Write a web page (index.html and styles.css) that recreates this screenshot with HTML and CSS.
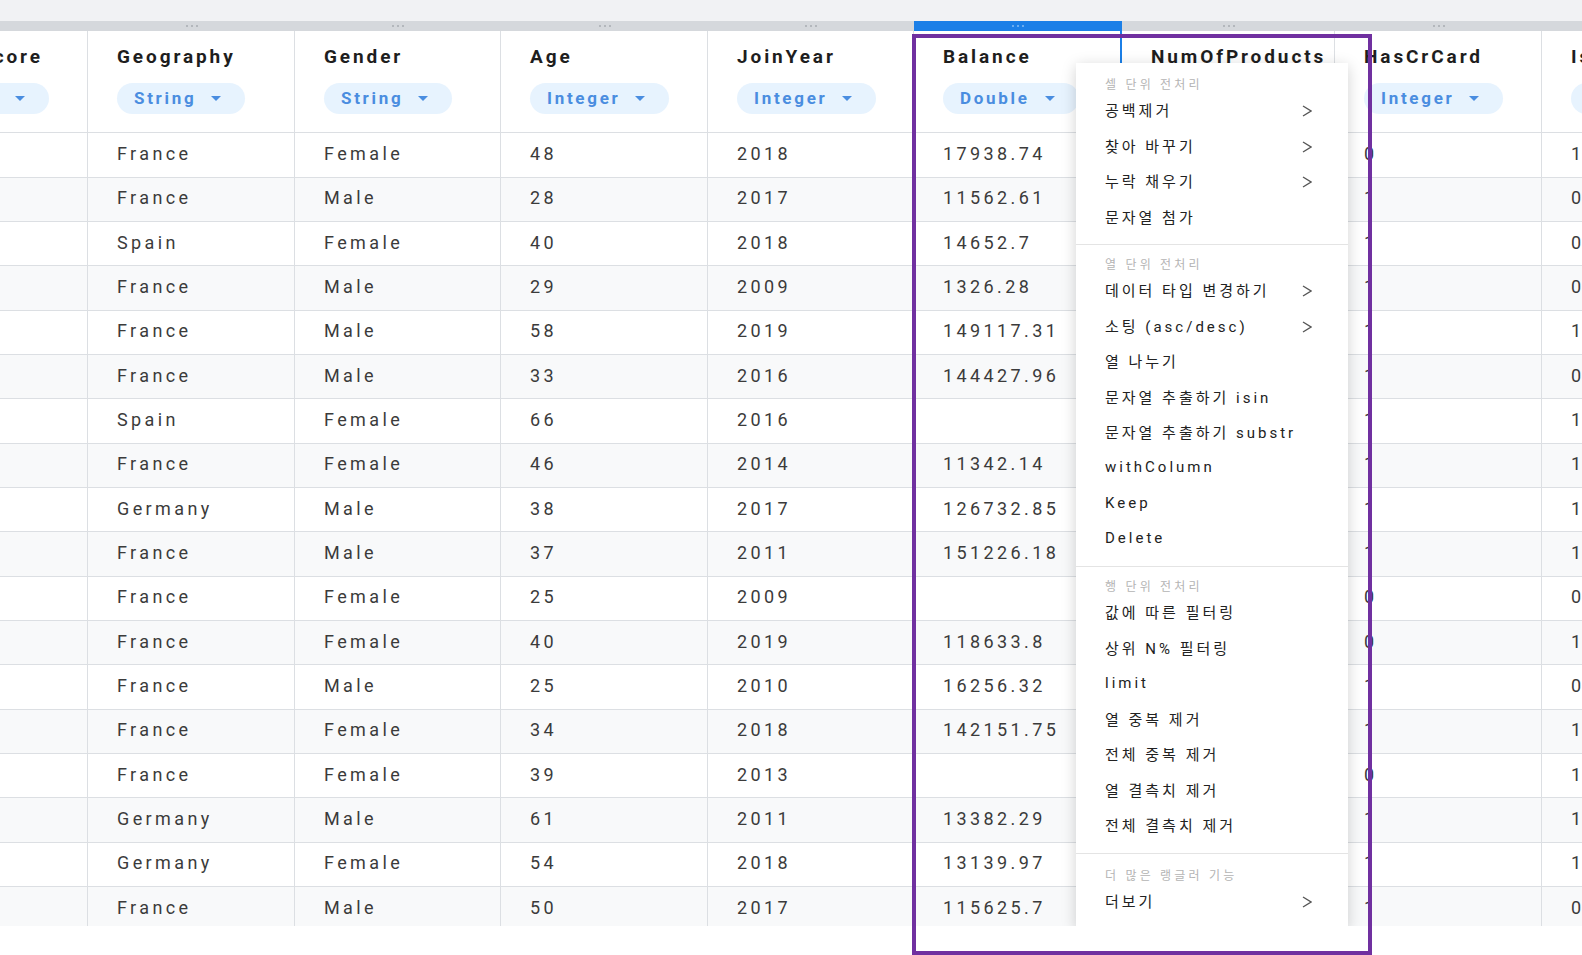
FILE: index.html
```html
<!DOCTYPE html>
<html lang="ko">
<head>
<meta charset="utf-8">
<title>Wrangler</title>
<link rel="stylesheet" href="styles.css">
</head>
<body>
<div class="topstrip"></div>
<div class="viewport">
  <div class="grid">
    <div class="cols handles">
      <div class="handle"><i></i><i></i><i></i></div>
      <div class="handle"><i></i><i></i><i></i></div>
      <div class="handle"><i></i><i></i><i></i></div>
      <div class="handle"><i></i><i></i><i></i></div>
      <div class="handle"><i></i><i></i><i></i></div>
      <div class="handle active"><i></i><i></i><i></i></div>
      <div class="handle"><i></i><i></i><i></i></div>
      <div class="handle"><i></i><i></i><i></i></div>
      <div class="handle"><i></i><i></i><i></i></div>
    </div>
    <div class="cols head">
      <div class="hcell"><div class="title">CreditScore</div><span class="pill">Integer<svg width="10" height="5" viewBox="0 0 10 5"><path d="M0 0H10L5 5Z" fill="currentColor"/></svg></span></div>
      <div class="hcell"><div class="title">Geography</div><span class="pill">String<svg width="10" height="5" viewBox="0 0 10 5"><path d="M0 0H10L5 5Z" fill="currentColor"/></svg></span></div>
      <div class="hcell"><div class="title">Gender</div><span class="pill">String<svg width="10" height="5" viewBox="0 0 10 5"><path d="M0 0H10L5 5Z" fill="currentColor"/></svg></span></div>
      <div class="hcell"><div class="title">Age</div><span class="pill">Integer<svg width="10" height="5" viewBox="0 0 10 5"><path d="M0 0H10L5 5Z" fill="currentColor"/></svg></span></div>
      <div class="hcell"><div class="title">JoinYear</div><span class="pill">Integer<svg width="10" height="5" viewBox="0 0 10 5"><path d="M0 0H10L5 5Z" fill="currentColor"/></svg></span></div>
      <div class="hcell active"><div class="title">Balance</div><span class="pill">Double<svg width="10" height="5" viewBox="0 0 10 5"><path d="M0 0H10L5 5Z" fill="currentColor"/></svg></span></div>
      <div class="hcell"><div class="title">NumOfProducts</div></div>
      <div class="hcell"><div class="title">HasCrCard</div><span class="pill">Integer<svg width="10" height="5" viewBox="0 0 10 5"><path d="M0 0H10L5 5Z" fill="currentColor"/></svg></span></div>
      <div class="hcell"><div class="title">IsActiveMember</div><span class="pill">Integer<svg width="10" height="5" viewBox="0 0 10 5"><path d="M0 0H10L5 5Z" fill="currentColor"/></svg></span></div>
    </div>
    <div class="cols row"><div class="cell">619</div><div class="cell">France</div><div class="cell">Female</div><div class="cell">48</div><div class="cell">2018</div><div class="cell">17938.74</div><div class="cell"></div><div class="cell">0</div><div class="cell">1</div></div>
    <div class="cols row alt"><div class="cell">608</div><div class="cell">France</div><div class="cell">Male</div><div class="cell">28</div><div class="cell">2017</div><div class="cell">11562.61</div><div class="cell"></div><div class="cell">1</div><div class="cell">0</div></div>
    <div class="cols row"><div class="cell">502</div><div class="cell">Spain</div><div class="cell">Female</div><div class="cell">40</div><div class="cell">2018</div><div class="cell">14652.7</div><div class="cell"></div><div class="cell">1</div><div class="cell">0</div></div>
    <div class="cols row alt"><div class="cell">699</div><div class="cell">France</div><div class="cell">Male</div><div class="cell">29</div><div class="cell">2009</div><div class="cell">1326.28</div><div class="cell"></div><div class="cell">1</div><div class="cell">0</div></div>
    <div class="cols row"><div class="cell">850</div><div class="cell">France</div><div class="cell">Male</div><div class="cell">58</div><div class="cell">2019</div><div class="cell">149117.31</div><div class="cell"></div><div class="cell">1</div><div class="cell">1</div></div>
    <div class="cols row alt"><div class="cell">645</div><div class="cell">France</div><div class="cell">Male</div><div class="cell">33</div><div class="cell">2016</div><div class="cell">144427.96</div><div class="cell"></div><div class="cell">1</div><div class="cell">0</div></div>
    <div class="cols row"><div class="cell">822</div><div class="cell">Spain</div><div class="cell">Female</div><div class="cell">66</div><div class="cell">2016</div><div class="cell"></div><div class="cell"></div><div class="cell">1</div><div class="cell">1</div></div>
    <div class="cols row alt"><div class="cell">376</div><div class="cell">France</div><div class="cell">Female</div><div class="cell">46</div><div class="cell">2014</div><div class="cell">11342.14</div><div class="cell"></div><div class="cell">1</div><div class="cell">1</div></div>
    <div class="cols row"><div class="cell">501</div><div class="cell">Germany</div><div class="cell">Male</div><div class="cell">38</div><div class="cell">2017</div><div class="cell">126732.85</div><div class="cell"></div><div class="cell">1</div><div class="cell">1</div></div>
    <div class="cols row alt"><div class="cell">684</div><div class="cell">France</div><div class="cell">Male</div><div class="cell">37</div><div class="cell">2011</div><div class="cell">151226.18</div><div class="cell"></div><div class="cell">1</div><div class="cell">1</div></div>
    <div class="cols row"><div class="cell">528</div><div class="cell">France</div><div class="cell">Female</div><div class="cell">25</div><div class="cell">2009</div><div class="cell"></div><div class="cell"></div><div class="cell">0</div><div class="cell">0</div></div>
    <div class="cols row alt"><div class="cell">497</div><div class="cell">France</div><div class="cell">Female</div><div class="cell">40</div><div class="cell">2019</div><div class="cell">118633.8</div><div class="cell"></div><div class="cell">0</div><div class="cell">1</div></div>
    <div class="cols row"><div class="cell">476</div><div class="cell">France</div><div class="cell">Male</div><div class="cell">25</div><div class="cell">2010</div><div class="cell">16256.32</div><div class="cell"></div><div class="cell">1</div><div class="cell">0</div></div>
    <div class="cols row alt"><div class="cell">549</div><div class="cell">France</div><div class="cell">Female</div><div class="cell">34</div><div class="cell">2018</div><div class="cell">142151.75</div><div class="cell"></div><div class="cell">1</div><div class="cell">1</div></div>
    <div class="cols row"><div class="cell">635</div><div class="cell">France</div><div class="cell">Female</div><div class="cell">39</div><div class="cell">2013</div><div class="cell"></div><div class="cell"></div><div class="cell">0</div><div class="cell">1</div></div>
    <div class="cols row alt"><div class="cell">616</div><div class="cell">Germany</div><div class="cell">Male</div><div class="cell">61</div><div class="cell">2011</div><div class="cell">13382.29</div><div class="cell"></div><div class="cell">1</div><div class="cell">1</div></div>
    <div class="cols row"><div class="cell">653</div><div class="cell">Germany</div><div class="cell">Female</div><div class="cell">54</div><div class="cell">2018</div><div class="cell">13139.97</div><div class="cell"></div><div class="cell">1</div><div class="cell">1</div></div>
    <div class="cols row alt"><div class="cell">549</div><div class="cell">France</div><div class="cell">Male</div><div class="cell">50</div><div class="cell">2017</div><div class="cell">115625.7</div><div class="cell"></div><div class="cell">1</div><div class="cell">0</div></div>
  </div>

  <div class="menu">
    <div class="sec">
      <div class="sec-title">셀 단위 전처리</div>
      <div class="item"><span>공백제거</span><svg class="chev" width="10" height="12" viewBox="0 0 10 12"><polyline points="1,1 9,6 1,11" fill="none" stroke="currentColor" stroke-width="1.3"/></svg></div>
      <div class="item"><span>찾아 바꾸기</span><svg class="chev" width="10" height="12" viewBox="0 0 10 12"><polyline points="1,1 9,6 1,11" fill="none" stroke="currentColor" stroke-width="1.3"/></svg></div>
      <div class="item"><span>누락 채우기</span><svg class="chev" width="10" height="12" viewBox="0 0 10 12"><polyline points="1,1 9,6 1,11" fill="none" stroke="currentColor" stroke-width="1.3"/></svg></div>
      <div class="item"><span>문자열 첨가</span></div>
    </div>
    <div class="sec">
      <div class="sec-title">열 단위 전처리</div>
      <div class="item"><span>데이터 타입 변경하기</span><svg class="chev" width="10" height="12" viewBox="0 0 10 12"><polyline points="1,1 9,6 1,11" fill="none" stroke="currentColor" stroke-width="1.3"/></svg></div>
      <div class="item"><span>소팅 (asc/desc)</span><svg class="chev" width="10" height="12" viewBox="0 0 10 12"><polyline points="1,1 9,6 1,11" fill="none" stroke="currentColor" stroke-width="1.3"/></svg></div>
      <div class="item"><span>열 나누기</span></div>
      <div class="item"><span>문자열 추출하기 isin</span></div>
      <div class="item"><span>문자열 추출하기 substr</span></div>
      <div class="item"><span>withColumn</span></div>
      <div class="item"><span>Keep</span></div>
      <div class="item"><span>Delete</span></div>
    </div>
    <div class="sec">
      <div class="sec-title">행 단위 전처리</div>
      <div class="item"><span>값에 따른 필터링</span></div>
      <div class="item"><span>상위 N% 필터링</span></div>
      <div class="item"><span>limit</span></div>
      <div class="item"><span>열 중복 제거</span></div>
      <div class="item"><span>전체 중복 제거</span></div>
      <div class="item"><span>열 결측치 제거</span></div>
      <div class="item"><span>전체 결측치 제거</span></div>
    </div>
    <div class="sec">
      <div class="sec-title">더 많은 랭글러 기능</div>
      <div class="item"><span>더보기</span><svg class="chev" width="10" height="12" viewBox="0 0 10 12"><polyline points="1,1 9,6 1,11" fill="none" stroke="currentColor" stroke-width="1.3"/></svg></div>
    </div>
  </div>
</div>
<div class="annotation"></div>
</body>
</html>
```

FILE: styles.css
```css
* { box-sizing: border-box; }

html, body {
  margin: 0;
  padding: 0;
}

body {
  position: relative;
  width: 1582px;
  height: 955px;
  overflow: hidden;
  background: #ffffff;
  font-family: Roboto, "Noto Sans CJK KR", sans-serif;
}

.topstrip {
  height: 21px;
  background: #f1f2f4;
}

.viewport {
  position: relative;
  height: 905px;
  overflow: hidden;
}

.grid {
  width: max-content;
  margin-left: -119px;
}

.cols {
  display: grid;
  grid-template-columns: 207px 207px 206px 207px 206px 208px 213px 207px 207px;
}

/* column resize handles */
.handles {
  height: 10px;
  background: #d5d8dc;
}

.handle {
  display: flex;
  justify-content: center;
  align-items: center;
  gap: 3px;
}

.handle i {
  display: block;
  width: 2px;
  height: 2px;
  border-radius: 50%;
  background: #a7acb2;
}

.handle.active { background: #1b7fe7; }
.handle.active i { background: #86bdf3; }

/* header */
.head {
  height: 102.3px;
  border-bottom: 1px solid #dcdfe3;
  background: #ffffff;
}

.hcell {
  border-right: 1px solid #dcdfe3;
  padding: 13px 0 0 29px;
  overflow: hidden;
}

.hcell.active { border-right: 2px solid #1b7fe7; }

.title {
  font-size: 19px;
  font-weight: 700;
  line-height: 26px;
  color: #1e1e1e;
  letter-spacing: 2.9px;
  white-space: nowrap;
}

.pill {
  display: inline-flex;
  align-items: center;
  height: 31px;
  margin-top: 13px;
  padding: 0 24px 1px 17px;
  border-radius: 16px;
  background: #e7f3fe;
  color: #4a8de0;
  font-size: 17px;
  font-weight: 700;
  letter-spacing: 2.7px;
  white-space: nowrap;
}

.pill svg { margin-left: 15px; }

/* data rows */
.row {
  height: 44.35px;
  border-bottom: 1px solid #dcdfe3;
  background: #ffffff;
}

.row.alt { background: #f8f9fa; }

.cell {
  display: flex;
  align-items: center;
  padding: 0 0 3px 29px;
  border-right: 1px solid #dcdfe3;
  font-size: 18px;
  color: #3b3b3b;
  letter-spacing: 3.4px;
  white-space: nowrap;
  overflow: hidden;
}

/* context menu */
.menu {
  position: absolute;
  left: 1076px;
  top: 42px;
  width: 272px;
  background: #ffffff;
  box-shadow: 0 3px 14px rgba(0, 0, 0, 0.18);
}

.sec {
  padding: 11px 36px 8px 29px;
  border-bottom: 1px solid #e4e4e4;
}

.sec:first-child { padding-top: 13px; }
.sec:last-child { border-bottom: none; }

.sec-title {
  font-size: 12px;
  line-height: 18px;
  color: #b4b4b4;
  letter-spacing: 3.2px;
  white-space: nowrap;
}

.sec:last-child .sec-title { padding-top: 2px; }

.item {
  display: flex;
  align-items: center;
  justify-content: space-between;
  height: 35.5px;
  padding-bottom: 4px;
  font-size: 15px;
  font-weight: 400;
  color: #222222;
  letter-spacing: 3px;
  white-space: nowrap;
}

.item .chev { margin-top: 3px; }

.chev {
  color: #555555;
  flex: none;
}

/* highlight annotation drawn over the screenshot */
.annotation {
  position: absolute;
  left: 912px;
  top: 34px;
  width: 460px;
  height: 921px;
  border: 4.5px solid #7030a0;
  pointer-events: none;
}
```
